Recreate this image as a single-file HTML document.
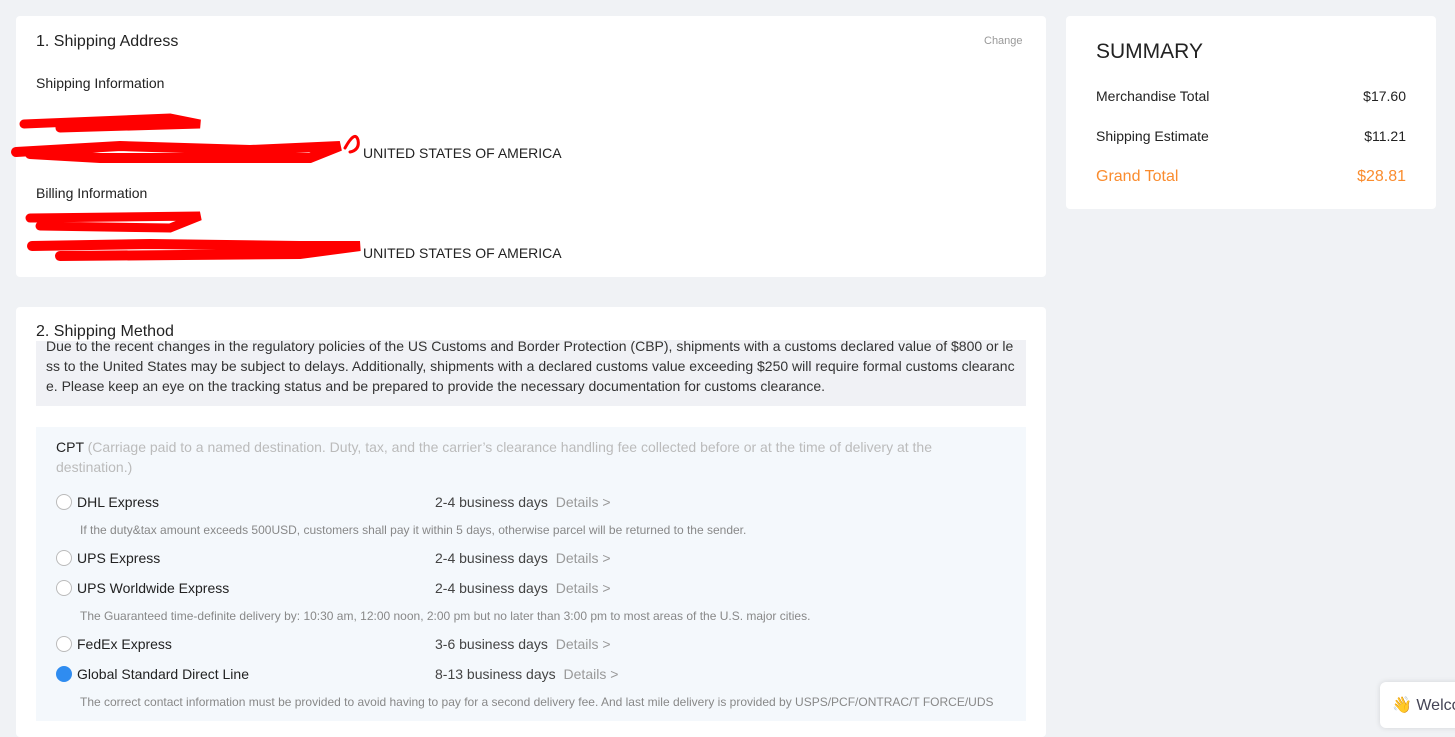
<!DOCTYPE html>
<html><head><meta charset="utf-8"><style>
*{margin:0;padding:0;box-sizing:border-box}
body{width:1455px;height:731px;overflow:hidden;background:#f0f2f5;font-family:"Liberation Sans",sans-serif;color:#222;position:relative}
.card{position:absolute;background:#fff;border-radius:4px}
.abs{position:absolute;white-space:nowrap}
.radio{position:absolute;width:16px;height:16px;border:1px solid #bbb;border-radius:50%;background:#fff}
.row{position:absolute;font-size:14px;color:#222}
.days{position:absolute;font-size:14px;color:#444}
.det{color:#999;margin-left:4px}
.note{position:absolute;font-size:12px;color:#888;white-space:nowrap}
</style></head><body>
<div class="card" style="left:16px;top:16px;width:1030px;height:261px">
 <div class="abs" style="left:20px;top:17px;font-size:16px;color:#222">1. Shipping Address</div>
 <div class="abs" style="left:968px;top:19px;font-size:11px;color:#999">Change</div>
 <div class="abs" style="left:20px;top:59px;font-size:14px">Shipping Information</div>
 <div class="abs" style="left:347px;top:129px;font-size:14px">UNITED STATES OF AMERICA</div>
 <div class="abs" style="left:20px;top:169px;font-size:14px">Billing Information</div>
 <div class="abs" style="left:347px;top:229px;font-size:14px">UNITED STATES OF AMERICA</div>
</div>
<svg class="abs" style="left:0;top:0" width="600" height="280">
 <g stroke="#f00" stroke-linecap="round" fill="none">
  <path d="M24 124 L170 118 L200 124 L60 128" stroke-width="9"/>
  <path d="M16 152 L120 146 L250 150 L340 146 L310 158 L100 158 L30 154" stroke-width="10"/>
  <path d="M345 148 Q355 130 358 140 Q360 150 350 152" stroke-width="3"/>
  <path d="M30 218 L200 216 L170 228 L40 226" stroke-width="9"/>
  <path d="M32 246 L150 244 L300 246 L360 246 L300 254 L60 256" stroke-width="10"/>
 </g>
</svg>
<div class="card" style="left:16px;top:307px;width:1030px;height:430px">
 <div style="position:absolute;left:20px;top:33px;width:990px;height:66px;background:#f0f1f5;overflow:hidden">
  <div style="position:absolute;left:10px;top:-4px;width:970px;font-size:14px;line-height:20px;color:#333;word-break:break-all">Due to the recent changes in the regulatory policies of the US Customs and Border Protection (CBP), shipments with a customs declared value of $800 or less to the United States may be subject to delays. Additionally, shipments with a declared customs value exceeding $250 will require formal customs clearance. Please keep an eye on the tracking status and be prepared to provide the necessary documentation for customs clearance.</div>
 </div>
 <div class="abs" style="left:20px;top:16px;font-size:16px;background:#fff;padding-right:4px;height:18px">2. Shipping Method</div>
 <div style="position:absolute;left:20px;top:120px;width:990px;height:294px;background:#f4f8fc">
  <div style="position:absolute;left:20px;top:10px;width:900px;font-size:14px;line-height:20px;color:#bbb"><span style="color:#222">CPT</span> (Carriage paid to a named destination. Duty, tax, and the carrier’s clearance handling fee collected before or at the time of delivery at the destination.)</div>
 </div>
</div>
<div class="radio" style="left:56px;top:494px"></div><div class="row" style="left:77px;top:494px">DHL Express</div><div class="days" style="left:435px;top:494px">2-4 business days <span class="det">Details &gt;</span></div>
<div class="note" style="left:80px;top:523px">If the duty&amp;tax amount exceeds 500USD, customers shall pay it within 5 days, otherwise parcel will be returned to the sender.</div>
<div class="radio" style="left:56px;top:550px"></div><div class="row" style="left:77px;top:550px">UPS Express</div><div class="days" style="left:435px;top:550px">2-4 business days <span class="det">Details &gt;</span></div>
<div class="radio" style="left:56px;top:580px"></div><div class="row" style="left:77px;top:580px">UPS Worldwide Express</div><div class="days" style="left:435px;top:580px">2-4 business days <span class="det">Details &gt;</span></div>
<div class="note" style="left:80px;top:609px">The Guaranteed time-definite delivery by: 10:30 am, 12:00 noon, 2:00 pm but no later than 3:00 pm to most areas of the U.S. major cities.</div>
<div class="radio" style="left:56px;top:636px"></div><div class="row" style="left:77px;top:636px">FedEx Express</div><div class="days" style="left:435px;top:636px">3-6 business days <span class="det">Details &gt;</span></div>
<div class="radio" style="left:56px;top:666px;background:#2f8cf0;border-color:#2f8cf0"></div><div class="row" style="left:77px;top:666px">Global Standard Direct Line</div><div class="days" style="left:435px;top:666px">8-13 business days <span class="det">Details &gt;</span></div>
<div class="note" style="left:80px;top:695px">The correct contact information must be provided to avoid having to pay for a second delivery fee. And last mile delivery is provided by USPS/PCF/ONTRAC/T FORCE/UDS</div>

<div class="card" style="left:1066px;top:16px;width:370px;height:193px">
 <div class="abs" style="left:30px;top:24px;font-size:21px;color:#222">SUMMARY</div>
 <div class="abs" style="left:30px;top:72px;font-size:14px">Merchandise Total</div>
 <div class="abs" style="right:30px;top:72px;font-size:14px">$17.60</div>
 <div class="abs" style="left:30px;top:112px;font-size:14px">Shipping Estimate</div>
 <div class="abs" style="right:30px;top:112px;font-size:14px">$11.21</div>
 <div class="abs" style="left:30px;top:152px;font-size:16px;color:#fa8c2e">Grand Total</div>
 <div class="abs" style="right:30px;top:152px;font-size:16px;color:#fa8c2e">$28.81</div>
</div>
<div style="position:absolute;left:1380px;top:682px;width:100px;height:46px;background:#fff;border-radius:6px;box-shadow:0 0 6px rgba(0,0,0,.12);font-size:16px;color:#445;padding:13px 0 0 12px;white-space:nowrap">👋 Welcome</div>
</body></html>
